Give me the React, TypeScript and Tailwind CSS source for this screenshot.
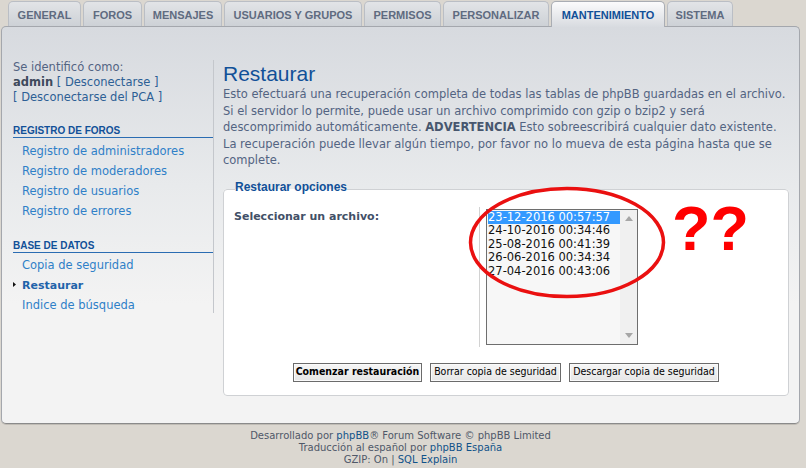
const tabs = [
  { label: "GENERAL", w: "w-[73px]" },
  { label: "FOROS", w: "w-[59px]" },
  { label: "MENSAJES", w: "w-[78px]" },
  { label: "USUARIOS Y GRUPOS", w: "w-[138px]" },
  { label: "PERMISOS", w: "w-[77px]" },
  { label: "PERSONALIZAR", w: "w-[106px]" },
  { label: "MANTENIMIENTO", w: "w-[114px]", active: true },
  { label: "SISTEMA", w: "w-[66px]" },
];

const backups = [
  "23-12-2016 00:57:57",
  "24-10-2016 00:34:46",
  "25-08-2016 00:41:39",
  "26-06-2016 00:34:34",
  "27-04-2016 00:43:06",
];

function SideLink({ children, active }: { children: React.ReactNode; active?: boolean }) {
  return (
    <div className="relative h-[20px] leading-[20px] pl-[20px] whitespace-nowrap">
      {active && (
        <svg className="absolute left-[11px] top-[7px]" width="4" height="6" viewBox="0 0 4 6">
          <polygon points="0,0 3,2.5 0,5" fill="#111" />
        </svg>
      )}
      <span className={active ? "font-bold text-[11px] text-[#1f63aa]" : "text-[#2f80c8]"}>{children}</span>
    </div>
  );
}

function SideHeader({ children }: { children: React.ReactNode }) {
  return (
    <div className="ml-[11px] h-[13px] leading-[12px] border-b border-[#2a6cb2] font-['Liberation_Sans',sans-serif] font-bold text-[10px] text-[#115098] whitespace-nowrap">
      {children}
    </div>
  );
}

function Btn({ children, w, bold }: { children: React.ReactNode; w: string; bold?: boolean }) {
  return (
    <div
      className={`${w} h-[19px] flex items-center justify-center border border-[#6b6b6b] bg-[linear-gradient(#f6f6f6,#e6e6e6)] shadow-[inset_0_0_0_1px_#fafafa] font-['DejaVu_Sans_Condensed',sans-serif] text-[10.5px] text-black whitespace-nowrap ${bold ? "font-bold" : ""}`}
    >
      {children}
    </div>
  );
}

export default function App() {
  return (
    <div className="relative w-[806px] h-[468px] overflow-hidden bg-[#dbd7d0] font-['DejaVu_Sans',sans-serif]">
      <div className="ml-[1px] w-[799px]">
        {/* Tabs */}
        <div className="flex items-end gap-[2px] pl-[7px] h-[26px]">
          {tabs.map((t) =>
            t.active ? (
              <div
                key={t.label}
                className={`${t.w} relative z-10 -mb-[1px] h-[26px] rounded-t-[5px] border border-b-0 border-[#a9adb4] bg-[linear-gradient(#fbfbfc,#d8dbe0)] flex items-center justify-center pt-[1px] font-['Liberation_Sans',sans-serif] font-bold text-[11px] text-[#115098]`}
              >
                {t.label}
              </div>
            ) : (
              <div
                key={t.label}
                className={`${t.w} h-[25px] rounded-t-[5px] border border-b-0 border-[#babec5] bg-[linear-gradient(#e2e4e7,#cdd1d6)] flex items-center justify-center pt-[3px] font-['Liberation_Sans',sans-serif] font-bold text-[11px] text-[#5f6b80]`}
              >
                {t.label}
              </div>
            )
          )}
        </div>

        {/* Panel */}
        <div className="h-[398px] rounded-[5px] border border-[#a4a7ad] border-b-[#8a8a8a] bg-[linear-gradient(#d7dadf,#e8eaec_40%,#f3f3f3_70%)] flex shadow-[0_1px_0_#c0bcb5]">
          {/* Sidebar */}
          <aside className="mt-[33px] w-[212px] h-[253px] border-r border-[#c4c7cc] text-[11.5px] shrink-0">
            <div className="pl-[11px] leading-[15px] text-[#536482] whitespace-nowrap">
              <div>Se identificó como:</div>
              <div>
                <span className="font-bold text-[#3e4a5c]">admin</span>{" "}
                <span className="text-[#2d5f95]">[ Desconectarse ]</span>
              </div>
              <div className="text-[#2d5f95]">[ Desconectarse del PCA ]</div>
            </div>
            <div className="mt-[20px]">
              <SideHeader>REGISTRO DE FOROS</SideHeader>
            </div>
            <div className="mt-[3px]">
              <SideLink>Registro de administradores</SideLink>
              <SideLink>Registro de moderadores</SideLink>
              <SideLink>Registro de usuarios</SideLink>
              <SideLink>Registro de errores</SideLink>
            </div>
            <div className="mt-[19px]">
              <SideHeader>BASE DE DATOS</SideHeader>
            </div>
            <div className="mt-[2px]">
              <SideLink>Copia de seguridad</SideLink>
              <SideLink active>Restaurar</SideLink>
              <SideLink>Indice de búsqueda</SideLink>
            </div>
          </aside>

          {/* Main */}
          <main className="flex-1 pl-[9px] pr-[10px] pt-[35px]">
            <h1 className="font-['Liberation_Sans',sans-serif] text-[21px] leading-[24px] text-[#115098] font-normal">
              Restaurar
            </h1>
            <p className="mt-[0px] text-[11.5px] leading-[16.5px] text-[#536482] whitespace-nowrap">
              Esto efectuará una recuperación completa de todas las tablas de phpBB guardadas en el archivo.
              <br />
              Si el servidor lo permite, puede usar un archivo comprimido con gzip o bzip2 y será
              <br />
              descomprimido automáticamente. <b className="text-[#47566e]">ADVERTENCIA</b> Esto sobreescribirá cualquier dato existente.
              <br />
              La recuperación puede llevar algún tiempo, por favor no lo mueva de esta página hasta que se
              <br />
              complete.
            </p>

            <fieldset className="mt-[11px] border border-[#cfd1d4] rounded-[4px] bg-white pb-[13px]">
              <legend className="ml-[11px] pb-[6px] font-['Liberation_Sans',sans-serif] font-bold text-[12px] leading-[14px] text-[#115098]">
                Restaurar opciones
              </legend>
              <div className="flex pt-[7px]">
                <div className="w-[256px] h-[140px] border-r border-[#d2d2d2] pl-[10px] pt-[3px] font-bold text-[11px] leading-[14px] text-[#425067] whitespace-nowrap">
                  Seleccionar un archivo:
                </div>
                <div className="ml-[6px] mt-[2px] w-[152px] h-[136px] border border-[#6e6e6e] bg-[#f7f7f7] flex">
                  <div className="w-[133px] pt-[1px] pl-[1px] text-[11.5px] leading-[13.5px] text-[#111] whitespace-nowrap">
                    {backups.map((b, i) => (
                      <div key={b} className={i === 0 ? "bg-[#3399ff] text-white" : ""}>
                        {b}
                      </div>
                    ))}
                  </div>
                  <div className="flex-1 bg-[#f0f0f0] flex flex-col items-center justify-between py-[6px]">
                    <svg width="8" height="5" viewBox="0 0 8 5">
                      <polygon points="0,5 4,0 8,5" fill="#a6a6a6" />
                    </svg>
                    <svg width="8" height="5" viewBox="0 0 8 5">
                      <polygon points="0,0 8,0 4,5" fill="#a6a6a6" />
                    </svg>
                  </div>
                </div>
              </div>
              <div className="mt-[16px] flex justify-center gap-[8px]">
                <Btn w="w-[129px]" bold>
                  Comenzar restauración
                </Btn>
                <Btn w="w-[131px]">Borrar copia de seguridad</Btn>
                <Btn w="w-[150px]">Descargar copia de seguridad</Btn>
              </div>
            </fieldset>
          </main>
        </div>

        {/* Footer */}
        <footer className="mt-[6px] text-center text-[10px] leading-[12px] text-[#4f5868]">
          <div>
            Desarrollado por <span className="text-[#105289]">phpBB</span>® Forum Software © phpBB Limited
          </div>
          <div>
            Traducción al español por <span className="text-[#105289]">phpBB España</span>
          </div>
          <div>
            GZIP: On | <span className="text-[#105289]">SQL Explain</span>
          </div>
        </footer>
      </div>

      {/* Annotations */}
      <svg className="absolute left-[468px] top-[186px]" width="198" height="113" viewBox="0 0 198 113">
        <ellipse cx="99" cy="56.5" rx="96.5" ry="54" fill="none" stroke="#ea1010" strokeWidth="3.5" />
      </svg>
      <div className="absolute left-[672px] top-[197px] font-['Liberation_Sans',sans-serif] font-bold text-[63px] leading-[63px] text-[#ff0000]">
        ??
      </div>
    </div>
  );
}
